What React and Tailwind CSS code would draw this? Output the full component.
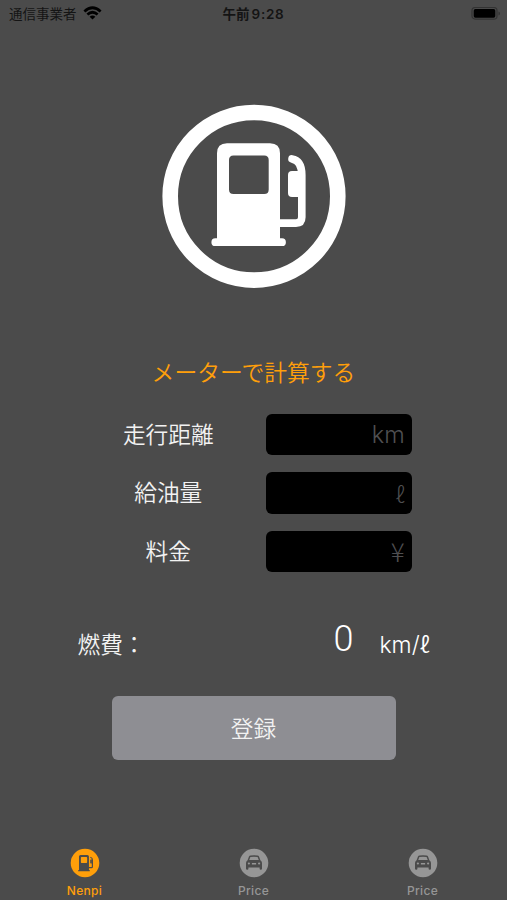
import React from 'react'

const fields = [
  { id: 'distance', label: '走行距離', unit: 'km', unitClass: "font-['Inter'] font-light" },
  { id: 'fuel', label: '給油量', unit: 'ℓ', unitClass: 'text-[22px] font-light' },
  { id: 'cost', label: '料金', unit: '¥', unitClass: 'text-[26px] font-light' }
]

const tabs = [
  { id: 1, name: 'Nenpi', icon: 'pump', active: true },
  { id: 2, name: 'Price', icon: 'car', active: false },
  { id: 3, name: 'Price', icon: 'car', active: false }
]

const PumpShape = () => (
  <>
    <path
      fill="currentColor"
      fillRule="evenodd"
      d="M65 39.3H108Q118 39.3 118 49.3V134.3H120A3.9 3.9 0 0 1 120 142.1H53.3A3.9 3.9 0 0 1 53.3 134.3H55V49.3Q55 39.3 65 39.3ZM71.5 51.5Q67 51.5 67 56V85.4Q67 89.9 71.5 89.9H102.2Q106.7 89.9 106.7 85.4V56Q106.7 51.5 102.2 51.5Z"
    />
    <path
      fill="none"
      stroke="currentColor"
      strokeWidth="7.6"
      strokeLinecap="round"
      d="M117 119.1H134Q139.8 119.1 139.8 113.2V71C139.8 61.5 137 56 130 54.9"
    />
    <path fill="currentColor" d="M136.5 67H130Q126 67 126 71V89Q126 93 130 93H136.5Z" />
  </>
)

const PumpLogo = () => (
  <svg viewBox="0 0 184 184" className="w-[184px] h-[184px] text-white">
    <circle cx="92" cy="92.3" r="83.8" fill="none" stroke="currentColor" strokeWidth="15.6" />
    <PumpShape />
  </svg>
)

const TabIcon = ({ icon }) => (
  <svg viewBox="0 0 30 30" className="w-[30px] h-[30px]">
    <circle cx="15" cy="15" r="14.3" fill="currentColor" />
    {icon === 'pump' ? (
      <g className="text-[#4b4b4b]" transform="translate(0.3 0.8) scale(0.158)">
        <PumpShape />
      </g>
    ) : (
      <path
        fill="#4b4b4b"
        fillRule="evenodd"
        d="M10 8.6Q10.4 7.6 11.5 7.5Q15 7.1 18.5 7.5Q19.6 7.6 20 8.6L21.4 12.2Q23 13.2 23 15V20.8Q23 21.8 21.8 21.8Q20.6 21.8 20.6 20.8V19.4H9.4V20.8Q9.4 21.8 8.2 21.8Q7 21.8 7 20.8V15Q7 13.2 8.6 12.2ZM11.4 9.1L10.2 12H19.8L18.6 9.1Q15 8.6 11.4 9.1ZM9.9 14.4A1.1 1.1 0 1 0 9.9 16.6A1.1 1.1 0 1 0 9.9 14.4ZM20.1 14.4A1.1 1.1 0 1 0 20.1 16.6A1.1 1.1 0 1 0 20.1 14.4ZM12.9 15V16.4H17.1V15Z"
      />
    )}
  </svg>
)

const StatusBar = () => (
  <header className="grid grid-cols-3 items-center h-7 pl-[9px] pr-[6px] text-[13.5px] leading-none text-[#141414]">
    <div className="flex items-center gap-[6px]">
      <span className="whitespace-nowrap">通信事業者</span>
      <svg viewBox="0 0 20 15" className="w-[19px] h-[14px] text-black -mt-[2px]">
        <g fill="none" stroke="currentColor" strokeWidth="2.9">
          <path d="M1.3 5.8Q10 -2 18.7 5.8" />
          <path d="M4.5 9.1Q10 4.3 15.5 9.1" />
        </g>
        <path fill="currentColor" d="M6.9 11.4Q10 8.9 13.1 11.4L10 14.5Z" />
      </svg>
    </div>
    <div className="text-center font-bold text-[13.5px] -ml-[3px] whitespace-nowrap">
      午前<span className="ml-[2px] font-['Inter'] font-semibold tracking-[0.7px]">9:28</span>
    </div>
    <div className="flex justify-end">
      <svg viewBox="0 0 30 14" className="w-[30px] h-[14px]">
        <rect x="1" y="0.5" width="25" height="11.6" rx="3.2" fill="none" stroke="#333" strokeWidth="1.2" />
        <rect x="2.7" y="2.1" width="21.6" height="8.6" rx="1.6" fill="#000" />
        <path d="M27.5 4.5V8.5Q29 7.9 29 6.5T27.5 4.5Z" fill="#333" />
      </svg>
    </div>
  </header>
)

const App = () => {
  return (
    <div className="flex flex-col w-[507px] h-[900px] overflow-hidden bg-[#4b4b4b] text-[#f2f2f2] font-['Noto_Sans_CJK_JP',sans-serif]">
      <StatusBar />

      <main className="flex flex-col items-center pt-[76px]">
        <PumpLogo />

        <h1 className="mt-[66px] h-9 text-[22.8px] leading-9 text-[#ff9f0a] font-[350]">
          メーターで計算する
        </h1>

        <div className="flex flex-col gap-[17px] mt-[23.5px] w-[317.5px]">
          {fields.map((field) => (
            <div key={field.id} className="flex items-center justify-between h-[41.5px]">
              <span className="w-[147px] text-center text-[22.7px] leading-none font-[350]">
                {field.label}
              </span>
              <div className="flex items-center justify-end w-[146.5px] h-[41.5px] pr-[7.5px] rounded-[6px] bg-black text-[#4f4f51] text-[23.5px] leading-none">
                <span className={field.unitClass}>{field.unit}</span>
              </div>
            </div>
          ))}
        </div>

        {/* Result row */}
        <div className="flex items-center justify-between w-[352px] h-12 mt-[43px]">
          <span className="text-[22.7px] leading-none pt-[10px] font-[350]">燃費：</span>
          <div className="flex items-end h-9 text-white">
            <span className="mr-[26px] text-[36px] leading-9 font-['Roboto'] font-[350]">0</span>
            <span className="text-[23px] leading-[23px] font-['Inter'] font-[350]">
              km/<span className="text-[22px] font-['Noto_Sans_CJK_JP',sans-serif]">ℓ</span>
            </span>
          </div>
        </div>

        <button className="w-[284px] h-[64px] mt-[33px] rounded-[6px] bg-[#8e8e93] text-[22.7px] leading-none font-[350]">
          登録
        </button>
      </main>

      <nav className="grid grid-cols-3 mt-auto h-[52px]">
        {tabs.map((tab) => (
          <div
            key={tab.id}
            className={`flex flex-col items-center gap-[6px] ${tab.active ? 'text-[#ff9f0a]' : 'text-[#969696]'}`}
          >
            <TabIcon icon={tab.icon} />
            <span className="font-['Inter'] font-medium text-[12px] leading-[14px] tracking-[0.3px]">{tab.name}</span>
          </div>
        ))}
      </nav>
    </div>
  )
}

export default App
